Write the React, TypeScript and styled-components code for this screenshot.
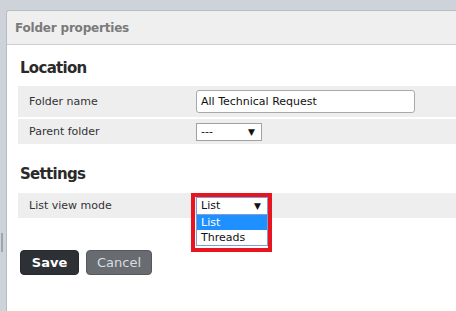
import React from "react";
import styled, { createGlobalStyle } from "styled-components";

const Global = createGlobalStyle`
  html, body { margin: 0; padding: 0; }
  body {
    background: #cdd3d9;
    font-family: "DejaVu Sans", Verdana, sans-serif;
    width: 456px;
    height: 311px;
    overflow: hidden;
    position: relative;
  }
`;

const Handle = styled.div`
  position: absolute;
  left: 1px;
  top: 233px;
  width: 2px;
  height: 19px;
  background: #9ea5ad;
`;

const Panel = styled.div`
  margin: 10px 0 0 6px;
  height: 301px;
  background: #fff;
  border-top: 1px solid #b6bcc3;
  border-left: 1px solid #b6bcc3;
  border-top-left-radius: 4px;
  box-sizing: border-box;
  overflow: hidden;
`;

const Header = styled.div`
  height: 33px;
  background: #efefef;
  border-bottom: 1px solid #cfcfcf;
  display: flex;
  align-items: center;
  padding-left: 8px;
  font-weight: bold;
  font-size: 12px;
  letter-spacing: -0.2px;
  color: #7a7a7a;
`;

const Body = styled.div`
  padding-left: 11px;
  display: flex;
  flex-direction: column;
`;

const SectionTitle = styled.h2<{ $top: number }>`
  margin: ${(p) => p.$top}px 0 0 2px;
  padding: 0;
  height: 24px;
  line-height: 24px;
  font-size: 15px;
  font-weight: bold;
  letter-spacing: -0.7px;
  color: #2a2a2a;
`;

const Rows = styled.div<{ $top: number }>`
  margin-top: ${(p) => p.$top}px;
  display: flex;
  flex-direction: column;
  gap: 2px;
`;

const Row = styled.div<{ $h: number }>`
  height: ${(p) => p.$h}px;
  background: #eeeeee;
  display: flex;
  align-items: center;
`;

const Label = styled.div`
  width: 178px;
  padding-left: 11px;
  box-sizing: border-box;
  font-size: 11px;
  color: #333;
`;

const TextInput = styled.div`
  width: 219px;
  height: 23px;
  box-sizing: border-box;
  background: #fff;
  border: 1px solid #a9a9a9;
  border-radius: 3px;
  display: flex;
  align-items: center;
  padding-left: 4px;
  font-size: 11px;
  color: #111;
`;

const SelectBox = styled.div<{ $w: number; $focus?: boolean }>`
  width: ${(p) => p.$w}px;
  height: 18px;
  box-sizing: border-box;
  background: #fff;
  border: 1px solid ${(p) => (p.$focus ? "#7a9fd6" : "#a0a0a0")};
  display: flex;
  align-items: center;
  justify-content: space-between;
  padding: 0 6px 0 4px;
  font-size: 11px;
  color: #111;
`;

const Arrow = styled.span`
  font-size: 9px;
  color: #111;
`;

const DropWrap = styled.div`
  position: relative;
`;

const Options = styled.div`
  position: absolute;
  left: 0;
  top: 18px;
  width: 72px;
  box-sizing: border-box;
  background: #fff;
  border: 1px solid #7a9fd6;
  border-top: none;
  z-index: 2;
`;

const Option = styled.div<{ $active?: boolean }>`
  height: 15px;
  display: flex;
  align-items: center;
  padding-left: 4px;
  font-size: 11px;
  background: ${(p) => (p.$active ? "#1e90ff" : "#fff")};
  color: ${(p) => (p.$active ? "#fff" : "#111")};
`;

const Highlight = styled.div`
  position: absolute;
  left: -5px;
  top: -4px;
  width: 81px;
  height: 59px;
  box-sizing: border-box;
  border: 4px solid #e8141f;
  z-index: 3;
  pointer-events: none;
`;

const Buttons = styled.div`
  margin: 32px 0 0 2px;
  display: flex;
  gap: 7px;
`;

const Button = styled.button<{ $primary?: boolean }>`
  height: 25px;
  padding: 0;
  width: ${(p) => (p.$primary ? 59 : 66)}px;
  border-radius: 4px;
  border: 1px solid ${(p) => (p.$primary ? "#25282c" : "#55595e")};
  background: ${(p) => (p.$primary ? "#2d3035" : "#686b6f")};
  color: ${(p) => (p.$primary ? "#fff" : "#d8dde2")};
  font-family: "DejaVu Sans", Verdana, sans-serif;
  font-size: 13px;
  font-weight: ${(p) => (p.$primary ? "bold" : "normal")};
`;

export default function App() {
  return (
    <>
      <Global />
      <Handle />
      <Panel>
        <Header>Folder properties</Header>
        <Body>
          <SectionTitle $top={11}>Location</SectionTitle>
          <Rows $top={6}>
            <Row $h={31}>
              <Label>Folder name</Label>
              <TextInput>All Technical Request</TextInput>
            </Row>
            <Row $h={25}>
              <Label>Parent folder</Label>
              <SelectBox $w={66}>
                <span>---</span>
                <Arrow>▼</Arrow>
              </SelectBox>
            </Row>
          </Rows>
          <SectionTitle $top={18}>Settings</SectionTitle>
          <Rows $top={7}>
            <Row $h={25}>
              <Label>List view mode</Label>
              <DropWrap>
                <SelectBox $w={72} $focus>
                  <span>List</span>
                  <Arrow>▼</Arrow>
                </SelectBox>
                <Options>
                  <Option $active>List</Option>
                  <Option>Threads</Option>
                </Options>
                <Highlight />
              </DropWrap>
            </Row>
          </Rows>
          <Buttons>
            <Button $primary>Save</Button>
            <Button>Cancel</Button>
          </Buttons>
        </Body>
      </Panel>
    </>
  );
}
